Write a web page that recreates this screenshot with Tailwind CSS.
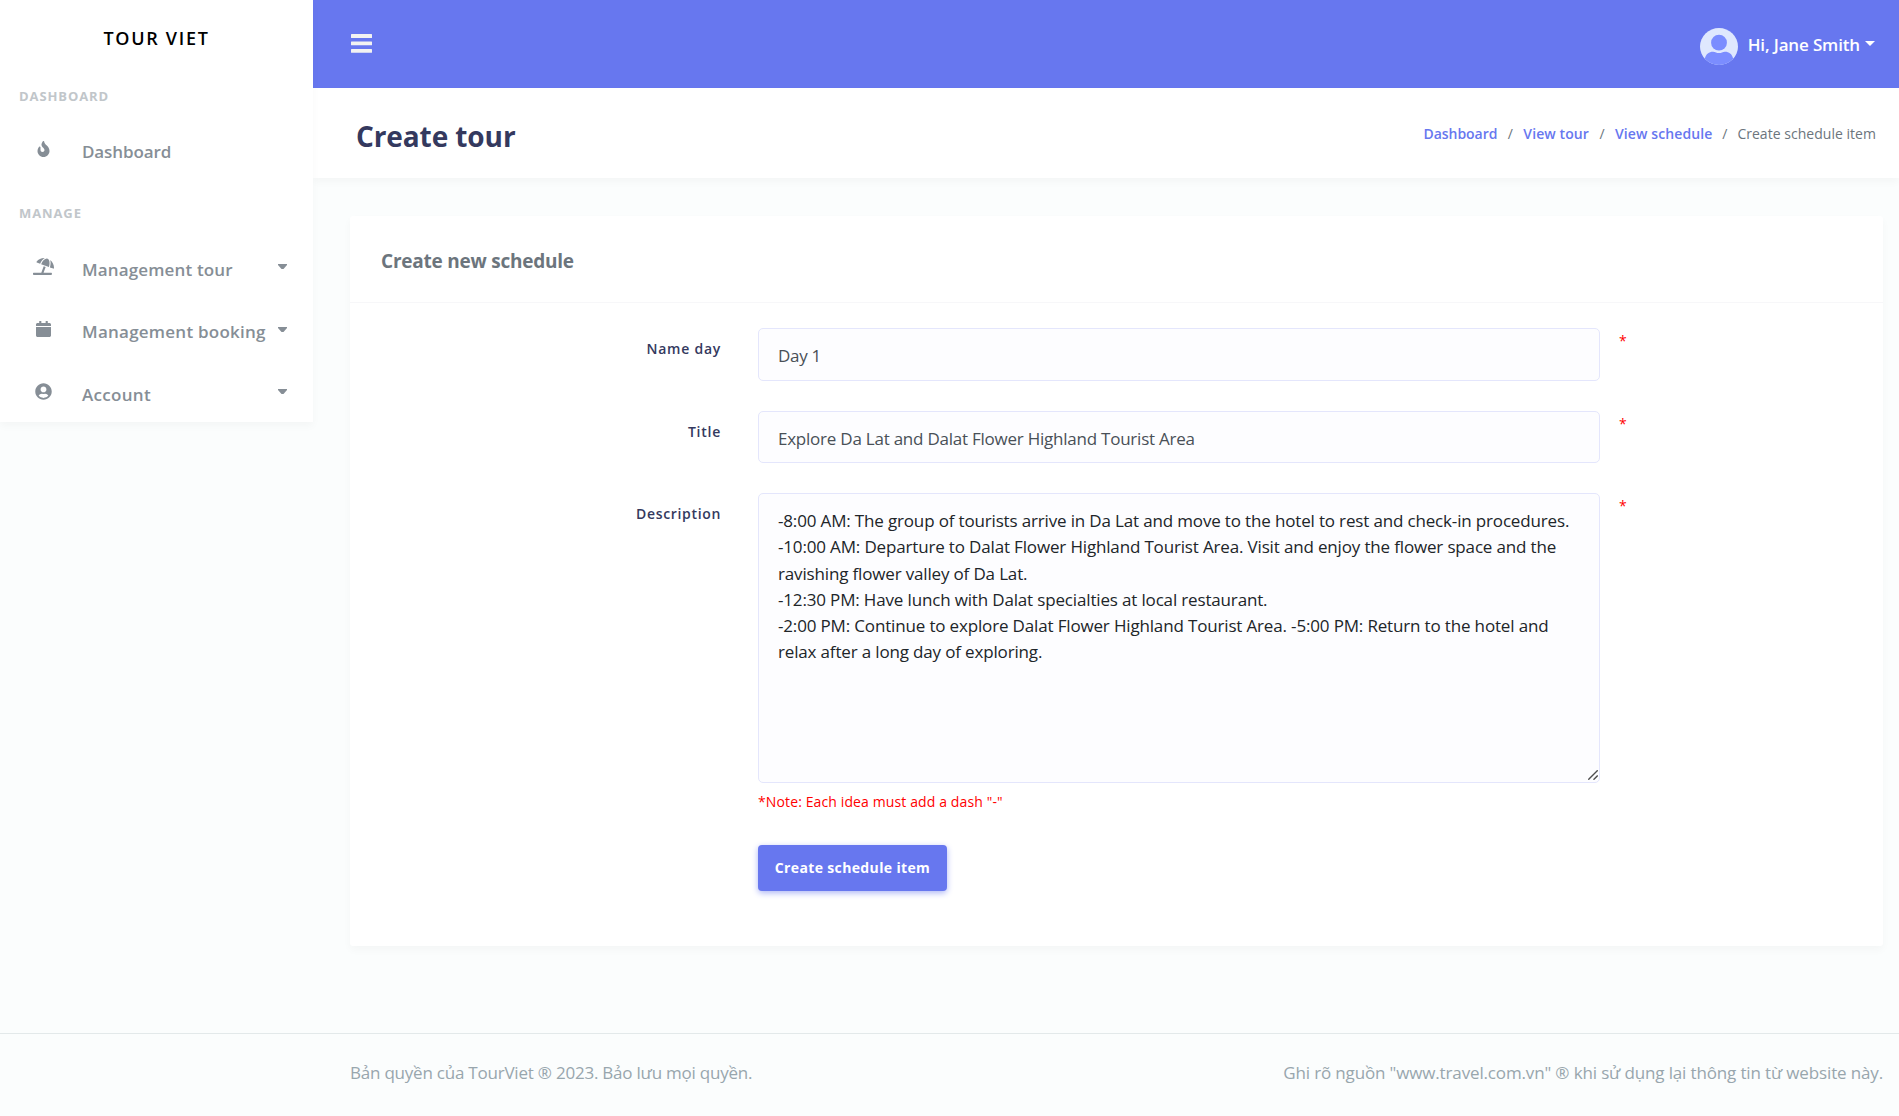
<!DOCTYPE html>
<html lang="en">
<head>
<meta charset="utf-8">
<title>Create tour</title>
<script src="https://cdn.jsdelivr.net/npm/@tailwindcss/browser@4"></script>
</head>
<body class="h-[1116px] overflow-hidden bg-[#fbfdfd] font-['Open_Sans','Noto_Sans',sans-serif] text-[17px] text-[#6c757d]">
<div class="flex h-full items-start">

  <!-- Sidebar -->
  <aside class="z-10 flex h-[422px] w-[313px] shrink-0 flex-col bg-white shadow-[0_4px_8px_rgba(0,0,0,0.03)]">
    <a class="mt-[8px] block h-[60px] shrink-0 text-center text-[18px] leading-[60px] font-semibold tracking-[1.7px] text-black">TOUR VIET</a>
    <div class="mt-[18px] h-5 shrink-0 pl-[19px] text-[13px] leading-5 font-bold tracking-[0.9px] text-[#c1c6ca]">DASHBOARD</div>
    <nav class="mt-[14px] flex h-[62px] shrink-0 items-center font-semibold text-[#868e96]">
      <span class="flex w-[86px] shrink-0 justify-center pb-[4px]"><svg class="h-4 w-[13px]" viewBox="0 0 384 512" fill="currentColor"><path d="M216 23.86c0-23.8-30.65-32.77-44.15-13.04C48 191.85 224 200 224 288c0 35.63-29.11 64.46-64.85 63.99-35.17-.45-63.15-29.77-63.15-64.94v-85.51c0-21.7-26.47-32.23-41.43-16.5C27.8 213.16 0 261.33 0 320c0 105.87 86.13 192 192 192s192-86.13 192-192c0-170.29-168-193-168-296.14z"/></svg></span>
      <span class="-ml-[4px] pt-px tracking-[-0.1px]">Dashboard</span>
    </nav>
    <div class="mt-[21px] h-5 shrink-0 pl-[19px] text-[13px] leading-5 font-bold tracking-[0.9px] text-[#c1c6ca]">MANAGE</div>
    <nav class="mt-[15px] flex shrink-0 flex-col font-semibold text-[#868e96]">
      <a class="flex h-[62px] items-center">
        <span class="flex w-[87px] shrink-0 justify-center pb-[6px]"><svg class="h-[17px] w-[21px]" viewBox="0 0 640 512" fill="currentColor"><path d="M115.38 136.9l102.11 37.18c35.19-81.54 86.21-144.29 139-173.7-95.88-4.89-188.78 36.96-248.53 111.8-6.69 8.4-2.66 21.05 7.42 24.72zm132.25 48.16l238.48 86.83c35.76-121.38 18.7-231.66-42.63-253.98-7.4-2.7-15.13-4-23.09-4-58.02.01-128.27 69.17-172.76 171.15zM521.48 60.5c6.22 16.3 10.83 34.6 13.2 55.19 5.74 49.89-1.42 108.23-18.95 166.98l102.62 37.36c10.09 3.67 21.31-3.43 21.57-14.17 2.32-95.69-41.91-187.44-118.44-245.36zM560 447.98H321.06L386 269.5l-60.14-21.9-72.9 200.37H16c-8.84 0-16 7.16-16 16.01v32.01C0 504.83 7.16 512 16 512h544c8.84 0 16-7.17 16-16.01v-32.01c0-8.84-7.16-16-16-16z"/></svg></span>
        <span class="-ml-[5px] pt-[2px] tracking-[0.14px]">Management tour</span>
        <svg class="mr-[26px] mb-[5px] ml-auto h-[5px] w-[9px]" viewBox="0 0 9 5" fill="currentColor"><path d="M0 0h9v1L5.5 5h-2L0 1z"/></svg>
      </a>
      <a class="flex h-[63px] items-center">
        <span class="flex w-[87px] shrink-0 justify-center pb-[5px]"><svg class="h-4 w-[15px]" viewBox="0 0 448 512" preserveAspectRatio="none" fill="currentColor"><path d="M12 192h424c6.600 0 12 5.400 12 12v260c0 26.500-21.500 48-48 48H48c-26.500 0-48-21.500-48-48V204c0-6.600 5.400-12 12-12zm436-44v-36c0-26.500-21.500-48-48-48h-48V12c0-6.600-5.400-12-12-12h-40c-6.600 0-12 5.400-12 12v52H160V12c0-6.600-5.400-12-12-12h-40c-6.600 0-12 5.400-12 12v52H48C21.500 64 0 85.500 0 112v36c0 6.600 5.400 12 12 12h424c6.600 0 12-5.400 12-12z"/></svg></span>
        <span class="-ml-[5px] tracking-[0.24px]">Management booking</span>
        <svg class="mr-[26px] mb-[5px] ml-auto h-[5px] w-[9px]" viewBox="0 0 9 5" fill="currentColor"><path d="M0 0h9v1L5.500 5h-2L0 1z"/></svg>
      </a>
      <a class="flex h-[62px] items-center">
        <span class="flex w-[86px] shrink-0 justify-center pb-[6px]"><svg class="size-[17px]" viewBox="0 0 496 512" fill="currentColor"><path d="M248 8C111 8 0 119 0 256s111 248 248 248 248-111 248-248S385 8 248 8zm0 96c48.600 0 88 39.400 88 88s-39.400 88-88 88-88-39.400-88-88 39.400-88 88-88zm0 344c-58.700 0-111.300-26.600-146.500-68.200 18.800-35.400 55.600-59.800 98.500-59.800 2.400 0 4.800.4 7.100 1.100 13 4.200 26.600 6.900 40.900 6.900 14.300 0 28-2.700 40.900-6.900 2.300-.7 4.700-1.100 7.100-1.100 42.900 0 79.700 24.400 98.500 59.800C359.300 421.400 306.700 448 248 448z"/></svg></span>
        <span class="-ml-[4px] pt-[2px] tracking-[0.3px]">Account</span>
        <svg class="mr-[26px] mb-[5px] ml-auto h-[5px] w-[9px]" viewBox="0 0 9 5" fill="currentColor"><path d="M0 0h9v1L5.500 5h-2L0 1z"/></svg>
      </a>
    </nav>
  </aside>

  <div class="flex h-full min-w-0 grow flex-col">
    <!-- Top bar -->
    <header class="flex h-[88px] shrink-0 items-center justify-between bg-[#6777ef] pr-[24px] pl-[38px] text-white">
      <svg class="mb-[2px] h-[19px] w-[21px]" viewBox="0 0 21 19" fill="#f2f2f2"><rect width="21" height="4" rx=".5"/><rect y="7.500" width="21" height="3.700" rx=".5"/><rect y="15" width="21" height="3.700" rx=".5"/></svg>
      <div class="flex items-center font-semibold">
        <svg class="mt-[5px] mr-[10px] h-[37px] w-[38px]" viewBox="0 0 38 37"><defs><clipPath id="av"><ellipse cx="19" cy="18.500" rx="19" ry="18.500"/></clipPath></defs><g clip-path="url(#av)"><rect width="38" height="37" fill="#dfe8fe"/><circle cx="19" cy="14.700" r="7.900" fill="#7b8dff"/><path d="M5 37V30c1-4 4-6.300 8-6.300 2.500 0 3.500 1.400 6 1.400s3.500-1.400 6-1.400c4 0 7 2.300 8 6.300v7z" fill="#7b8dff"/></g></svg>
        <span class="pt-[2px] tracking-[-0.15px]">Hi, Jane Smith</span>
        <svg class="mb-px ml-[5px] h-[5px] w-[10px]" viewBox="0 0 10 5" fill="currentColor"><path d="M0 0h10L5 5z"/></svg>
      </div>
    </header>

    <!-- Page heading -->
    <div class="flex h-[90px] shrink-0 items-center justify-between bg-white pr-[23px] pl-[43px] shadow-[0_4px_8px_rgba(0,0,0,0.03)]">
      <h1 class="mt-[6px] text-[28px] leading-9 font-bold tracking-[-0.1px] text-[#34395e]">Create tour</h1>
      <ol class="flex pt-[2px] text-[14px] leading-5">
        <li class="font-semibold tracking-[-0.05px] text-[#6777ef]">Dashboard</li><li class="w-[26px] text-center">/</li>
        <li class="font-semibold tracking-[0.1px] text-[#6777ef]">View tour</li><li class="w-[26px] text-center">/</li>
        <li class="font-semibold tracking-[0.1px] text-[#6777ef]">View schedule</li><li class="w-[25px] text-center">/</li>
        <li class="tracking-[0.03px]">Create schedule item</li>
      </ol>
    </div>

    <!-- Form card -->
    <main class="mt-[38px] mr-[16px] ml-[37px] h-[730px] shrink-0 rounded-[3px] bg-white shadow-[0_4px_8px_rgba(0,0,0,0.03)]">
      <div class="flex h-[87px] items-center border-b border-[#f7f7f9] pt-[3px] pl-[31px]">
        <h2 class="text-[19px] leading-7 font-bold tracking-[-0.23px]">Create new schedule</h2>
      </div>
      <form class="pt-[25px]">
        <div class="flex h-[83px] items-start">
          <label class="mt-[11px] w-[371px] text-right text-[14px] leading-5 font-semibold tracking-[0.75px] text-[#34395e]">Name day</label>
          <input class="ml-[37px] h-[53px] w-[842px] rounded-[5px] border border-[#e4e6fc] bg-[#fdfdff] px-[19px] pt-px tracking-[-0.3px] text-[#495057]" value="Day 1">
          <span class="mt-[3px] ml-[19px] text-[14px] leading-5 text-[#ff0000]">*</span>
        </div>
        <div class="flex h-[82px] items-start">
          <label class="mt-[11px] w-[371px] text-right text-[14px] leading-5 font-semibold tracking-[0.75px] text-[#34395e]">Title</label>
          <input class="ml-[37px] h-[52px] w-[842px] rounded-[5px] border border-[#e4e6fc] bg-[#fdfdff] px-[19px] pt-[2px] tracking-[-0.235px] text-[#495057]" value="Explore Da Lat and Dalat Flower Highland Tourist Area">
          <span class="mt-[3px] ml-[19px] text-[14px] leading-5 text-[#ff0000]">*</span>
        </div>
        <div class="flex items-start">
          <label class="mt-[11px] w-[371px] text-right text-[14px] leading-5 font-semibold tracking-[0.66px] text-[#34395e]">Description</label>
          <div class="ml-[37px] flex w-[842px] flex-col items-start">
            <div class="relative w-full">
              <textarea class="block h-[290px] w-full resize-none rounded-[5px] border border-[#e4e6fc] bg-[#fdfdff] py-[14px] pr-3 pl-[19px] leading-[26.25px] tracking-[-0.16px] text-[#212529]">-8:00 AM: The group of tourists arrive in Da Lat and move to the hotel to rest and check-in procedures.
-10:00 AM: Departure to Dalat Flower Highland Tourist Area. Visit and enjoy the flower space and the
ravishing flower valley of Da Lat.
-12:30 PM: Have lunch with Dalat specialties at local restaurant.
-2:00 PM: Continue to explore Dalat Flower Highland Tourist Area. -5:00 PM: Return to the hotel and
relax after a long day of exploring.</textarea>
              <svg class="absolute right-[2px] bottom-[3px] size-[10px]" viewBox="0 0 10 10" stroke="#4d4d4d" stroke-width="1.400"><path d="M.3 9.700 9.700.3M5.500 9.700l4.200-4.200"/></svg>
            </div>
            <p class="mt-[9px] text-[14px] leading-5 tracking-[0.12px] text-[#ff0000]">*Note: Each idea must add a dash "-"</p>
            <button type="button" class="mt-[33px] h-[46px] w-[189px] rounded-[4px] bg-[#6777ef] pb-px text-[14px] leading-5 font-bold tracking-[0.36px] text-white shadow-[0_2px_6px_#acb5f6]">Create schedule item</button>
          </div>
          <span class="mt-[3px] ml-[19px] text-[14px] leading-5 text-[#ff0000]">*</span>
        </div>
      </form>
    </main>
  </div>
</div>

<!-- Footer spans the full width, beneath the sidebar -->
<footer class="relative -mt-[83px] flex h-[83px] justify-between border-t border-[#e3e9ea] pt-[26px] pr-[16px] pl-[350px] leading-[26px] text-[#98a6ad]">
  <span class="tracking-[-0.22px]">Bản quyền của TourViet ® 2023. Bảo lưu mọi quyền.</span>
  <span class="tracking-[-0.145px]">Ghi rõ nguồn "www.travel.com.vn" ® khi sử dụng lại thông tin từ website này.</span>
</footer>
</body>
</html>
